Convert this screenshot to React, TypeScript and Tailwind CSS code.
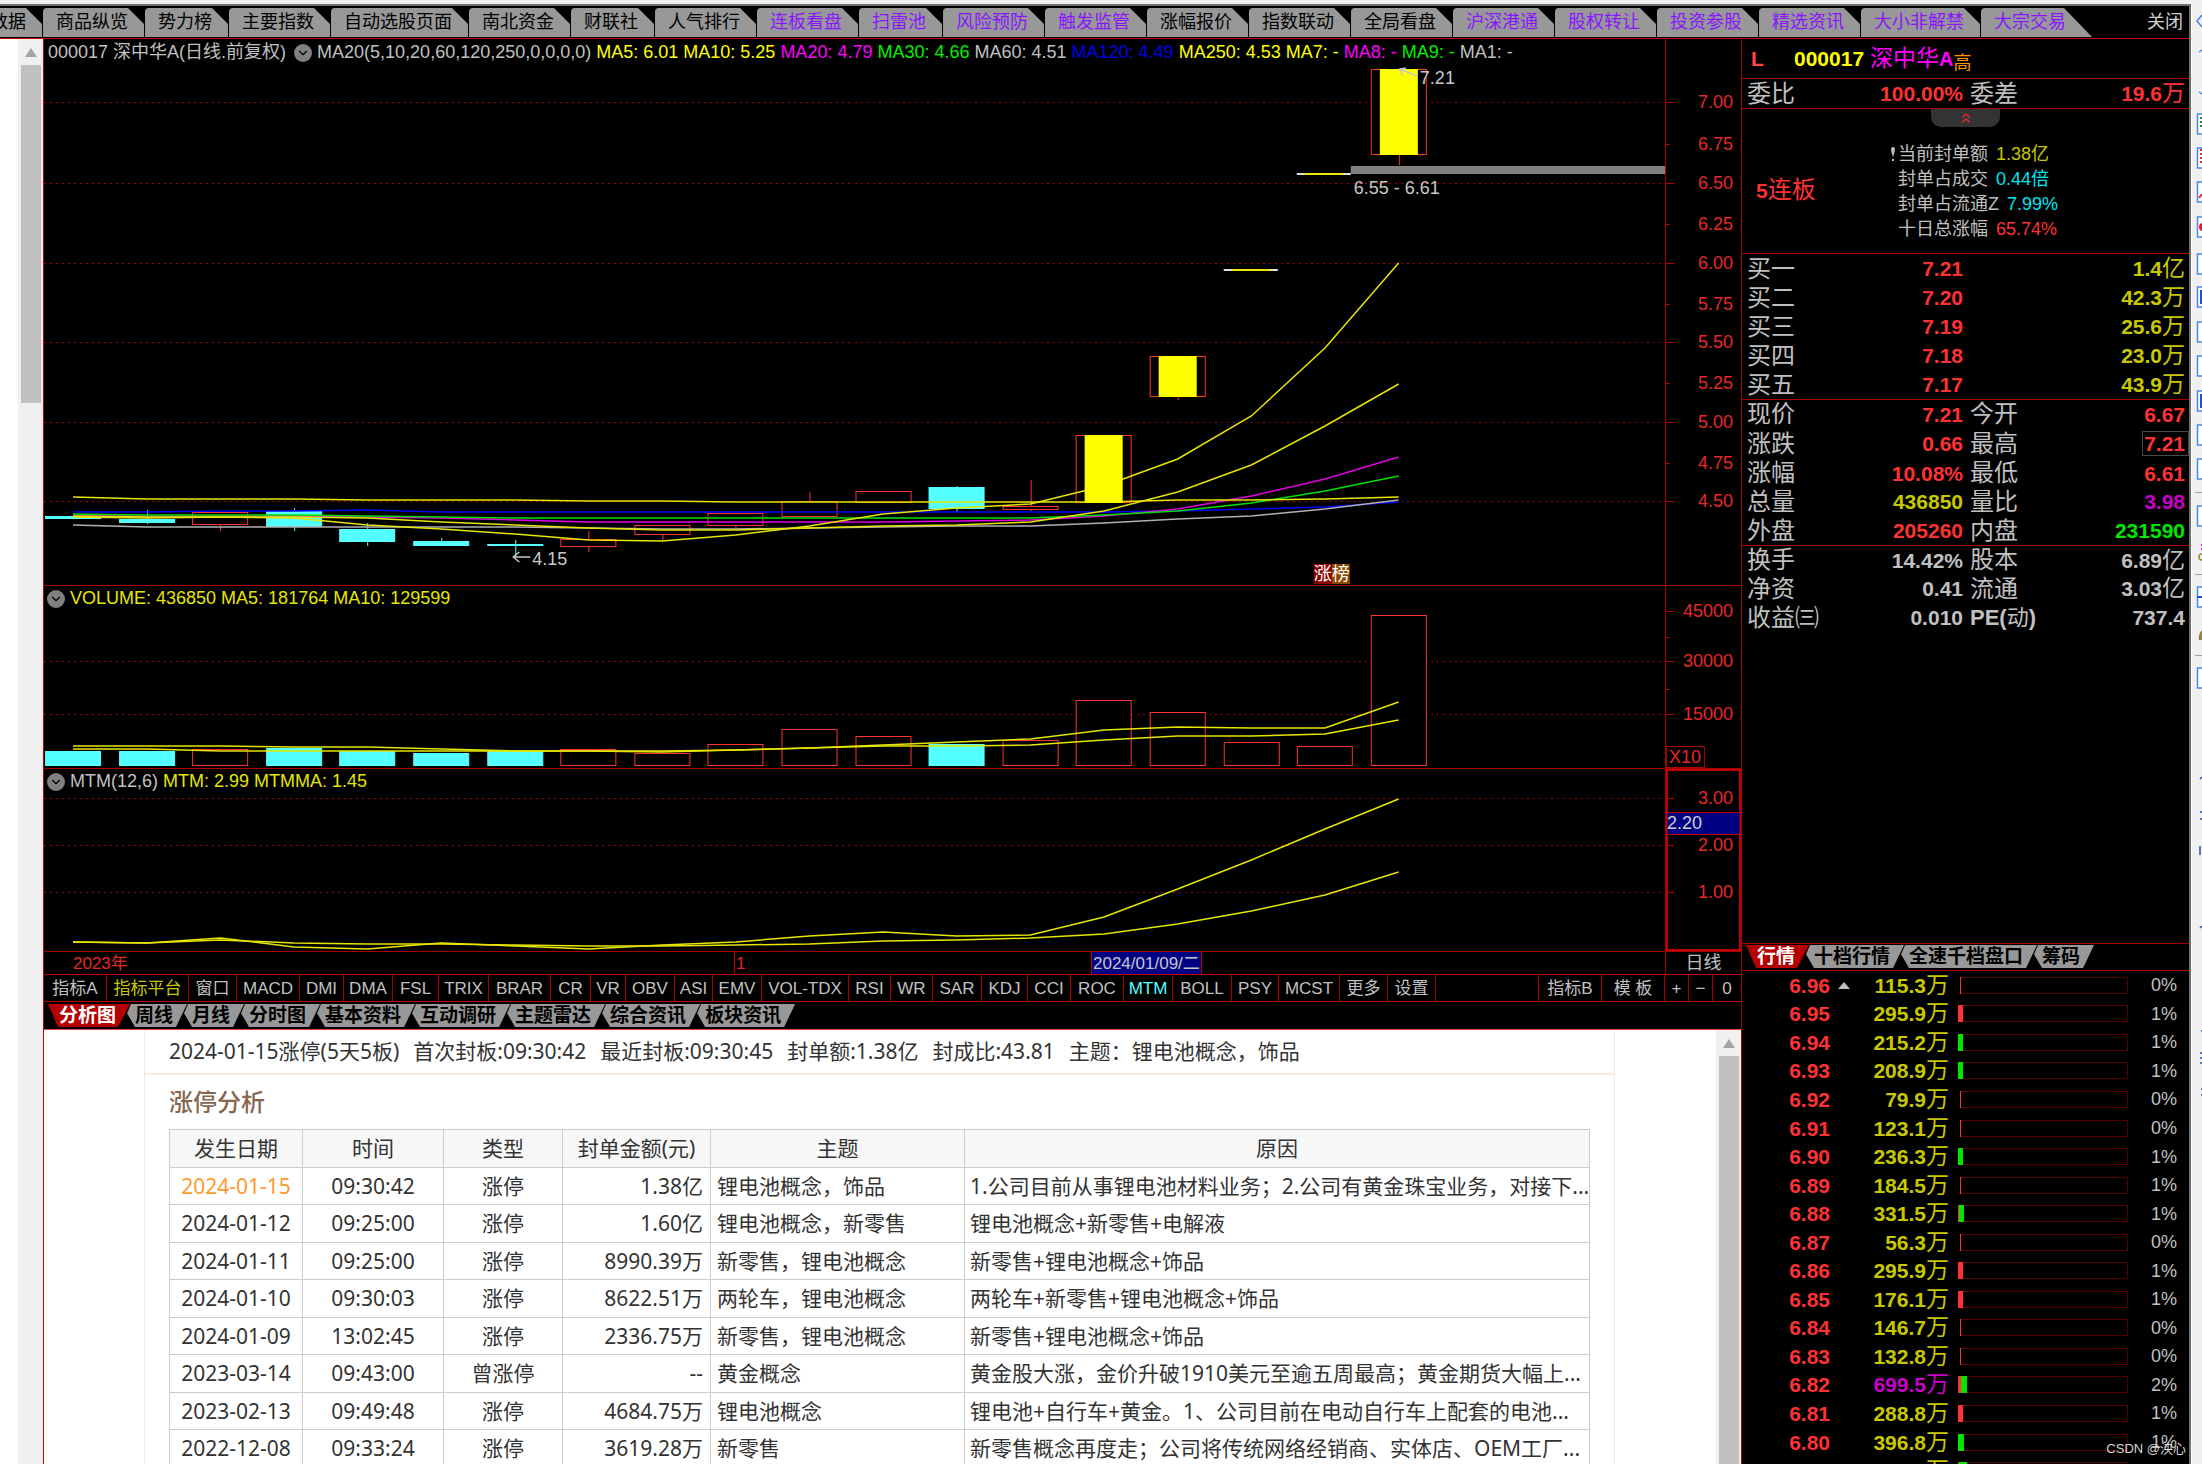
import type { ReactNode } from 'react'
import clsx from 'clsx'
import { ChevronDown, ChevronsUp } from 'lucide-react'

type Row = string[]

const pageTabs: [string, boolean][] = [
    ['商品纵览', false], ['势力榜', false], ['主要指数', false], ['自动选股页面', false],
    ['南北资金', false], ['财联社', false], ['人气排行', false], ['连板看盘', true],
    ['扫雷池', true], ['风险预防', true], ['触发监管', true], ['涨幅报价', false],
    ['指数联动', false], ['全局看盘', false], ['沪深港通', true], ['股权转让', true],
    ['投资参股', true], ['精选资讯', true], ['大小非解禁', true], ['大宗交易', true],
]

const averages: [string, string][] = [
    ['MA5: 6.01', 'text-[#ffff00]'],
    ['MA10: 5.25', 'text-[#ffff00]'],
    ['MA20: 4.79', 'text-[#ff00ff]'],
    ['MA30: 4.66', 'text-[#00f000]'],
    ['MA60: 4.51', 'text-[#c0c0c0]'],
    ['MA120: 4.49', 'text-[#0000e6]'],
    ['MA250: 4.53', 'text-[#ffff00]'],
    ['MA7: -', 'text-[#ffff00]'],
    ['MA8: -', 'text-[#ff00ff]'],
    ['MA9: -', 'text-[#00f000]'],
    ['MA1: -', 'text-[#c0c0c0]'],
]

const indicators: [string, string][] = [
    ['指标A', 'w-[63px]'], ['指标平台', 'w-[82px] text-[#c8c800]'], ['窗口', 'w-[48px]'],
    ['MACD', 'w-[63px]'], ['DMI', 'w-[44px]'], ['DMA', 'w-[49px]'], ['FSL', 'w-[46px]'],
    ['TRIX', 'w-[50px]'], ['BRAR', 'w-[62px]'], ['CR', 'w-[40px]'], ['VR', 'w-[35px]'],
    ['OBV', 'w-[49px]'], ['ASI', 'w-[38px]'], ['EMV', 'w-[49px]'], ['VOL-TDX', 'w-[87px]'],
    ['RSI', 'w-[42px]'], ['WR', 'w-[42px]'], ['SAR', 'w-[49px]'], ['KDJ', 'w-[46px]'],
    ['CCI', 'w-[43px]'], ['ROC', 'w-[53px]'], ['MTM', 'w-[49px] text-[#54ffff]'],
    ['BOLL', 'w-[59px]'], ['PSY', 'w-[47px]'], ['MCST', 'w-[61px]'], ['更多', 'w-[48px]'],
    ['设置', 'w-[48px]'],
]

const indicatorsRight: [string, string][] = [
    ['指标B', 'w-[63px]'], ['模 板', 'w-[63px]'], ['+', 'w-[24px]'], ['−', 'w-[24px]'], ['0', 'w-[28px]'],
]

// top, bottom, high, low of each day, in chart units
interface Candle {
    kind: 'up' | 'down' | 'limit' | 'dash'
    body: [number, number]
    wick?: [number, number]
    volume: number
}

const candles: Candle[] = [
    { kind: 'down', body: [516, 519], volume: 751 },
    { kind: 'down', body: [519, 523], wick: [510, 524], volume: 751 },
    { kind: 'up', body: [512, 525], wick: [525, 531], volume: 749 },
    { kind: 'down', body: [511, 527], wick: [508, 531], volume: 748 },
    { kind: 'down', body: [529, 542], wick: [523, 546], volume: 751 },
    { kind: 'down', body: [541, 546], wick: [538, 546], volume: 753 },
    { kind: 'down', body: [544, 546], wick: [540, 557], volume: 751 },
    { kind: 'up', body: [539, 547], wick: [531, 552], volume: 749 },
    { kind: 'up', body: [525, 535], wick: [535, 541], volume: 753 },
    { kind: 'up', body: [513, 526], wick: [526, 528], volume: 744 },
    { kind: 'up', body: [501, 517], wick: [492, 501], volume: 729 },
    { kind: 'up', body: [491, 503], volume: 736 },
    { kind: 'down', body: [487, 509], wick: [486, 512], volume: 744 },
    { kind: 'up', body: [506, 510], wick: [480, 512], volume: 740 },
    { kind: 'limit', body: [435, 503], volume: 700 },
    { kind: 'limit', body: [356, 397], wick: [397, 400], volume: 712 },
    { kind: 'dash', body: [270, 270], volume: 742 },
    { kind: 'dash', body: [174, 174], volume: 746 },
    { kind: 'limit', body: [69, 155], wick: [155, 165], volume: 615 },
]

const priceLines: [string, number[]][] = [
    ['#0000ff', [512, 512, 511, 511, 510, 512, 512, 512, 512, 512, 512, 512, 512, 512, 512, 511, 509, 507, 502]],
    ['#b0b0b0', [525, 527, 527, 527, 527, 527, 527, 528, 529, 529, 528, 527, 526, 526, 523, 519, 516, 509, 500]],
    ['#e000e0', [516, 516, 516, 516, 517, 518, 520, 522, 522, 522, 522, 522, 521, 520, 516, 509, 496, 479, 457]],
    ['#00e000', [514, 515, 515, 515, 516, 517, 518, 518, 518, 518, 518, 518, 518, 518, 515, 511, 503, 491, 476]],
    ['#e6e600', [497, 499, 499, 499, 500, 500, 500, 501, 501, 502, 502, 502, 502, 502, 502, 500, 500, 499, 497]],
    ['#e6e600', [516, 517, 517, 517, 518, 522, 525, 528, 530, 530, 528, 526, 525, 522, 511, 492, 465, 426, 384]],
    ['#e6e600', [517, 518, 517, 518, 525, 529, 534, 540, 541, 535, 526, 514, 508, 504, 486, 459, 416, 348, 263]],
]

const volumeLines = [
    [746, 746, 746, 747, 747, 749, 751, 751, 752, 750, 748, 745, 742, 739, 730, 727, 728, 728, 702],
    [749, 749, 751, 751, 751, 751, 751, 751, 751, 750, 748, 746, 746, 745, 740, 736, 736, 734, 720],
]

const mtmLines = [
    [942, 943, 938, 947, 949, 943, 946, 949, 945, 942, 936, 932, 936, 935, 917, 889, 860, 829, 799],
    [942, 943, 940, 943, 944, 944, 945, 946, 946, 945, 944, 941, 940, 938, 934, 924, 911, 895, 872],
]

const cx = (i: number) => 29 + i * 73.6
const toPoints = (ys: number[]) => ys.map((y, i) => `${cx(i)},${y}`).join(' ')

const events: Row[] = [
    ['2024-01-15', '09:30:42', '涨停', '1.38亿', '锂电池概念，饰品', '1.公司目前从事锂电池材料业务；2.公司有黄金珠宝业务，对接下...'],
    ['2024-01-12', '09:25:00', '涨停', '1.60亿', '锂电池概念，新零售', '锂电池概念+新零售+电解液'],
    ['2024-01-11', '09:25:00', '涨停', '8990.39万', '新零售，锂电池概念', '新零售+锂电池概念+饰品'],
    ['2024-01-10', '09:30:03', '涨停', '8622.51万', '两轮车，锂电池概念', '两轮车+新零售+锂电池概念+饰品'],
    ['2024-01-09', '13:02:45', '涨停', '2336.75万', '新零售，锂电池概念', '新零售+锂电池概念+饰品'],
    ['2023-03-14', '09:43:00', '曾涨停', '--', '黄金概念', '黄金股大涨，金价升破1910美元至逾五周最高；黄金期货大幅上...'],
    ['2023-02-13', '09:49:48', '涨停', '4684.75万', '锂电池概念', '锂电池+自行车+黄金。1、公司目前在电动自行车上配套的电池...'],
    ['2022-12-08', '09:33:24', '涨停', '3619.28万', '新零售', '新零售概念再度走；公司将传统网络经销商、实体店、OEM工厂...'],
]

const bids: Row[] = [
    ['买一', '7.21', '1.4亿'],
    ['买二', '7.20', '42.3万'],
    ['买三', '7.19', '25.6万'],
    ['买四', '7.18', '23.0万'],
    ['买五', '7.17', '43.9万'],
]

const red = 'text-[#ff3232]'
const yellow = 'text-[#c8c800]'
const gray = 'text-[#c0c0c0]'

const quote: Row[] = [
    ['现价', '7.21', red, '今开', '6.67', red],
    ['涨跌', '0.66', red, '最高', '7.21', red],
    ['涨幅', '10.08%', red, '最低', '6.61', red],
    ['总量', '436850', yellow, '量比', '3.98', 'text-[#c800c8]'],
    ['外盘', '205260', red, '内盘', '231590', 'text-[#00e600]'],
]

const finance: Row[] = [
    ['换手', '14.42%', gray, '股本', '6.89亿', gray],
    ['净资', '0.41', gray, '流通', '3.03亿', gray],
    ['收益㈢', '0.010', gray, 'PE(动)', '737.4', gray],
]

// price, volume, red part and green part of the bar, percent
const levels: [string, string, number, number, string][] = [
    ['6.96', '115.3万', 1, 0, '0%'],
    ['6.95', '295.9万', 5, 0, '1%'],
    ['6.94', '215.2万', 0, 5, '1%'],
    ['6.93', '208.9万', 0, 5, '1%'],
    ['6.92', '79.9万', 1, 0, '0%'],
    ['6.91', '123.1万', 1, 0, '0%'],
    ['6.90', '236.3万', 0, 5, '1%'],
    ['6.89', '184.5万', 1, 0, '1%'],
    ['6.88', '331.5万', 1, 5, '1%'],
    ['6.87', '56.3万', 1, 0, '0%'],
    ['6.86', '295.9万', 5, 0, '1%'],
    ['6.85', '176.1万', 5, 0, '1%'],
    ['6.84', '146.7万', 1, 0, '0%'],
    ['6.83', '132.8万', 1, 0, '0%'],
    ['6.82', '699.5万', 3, 6, '2%'],
    ['6.81', '288.8万', 5, 0, '1%'],
    ['6.80', '396.8万', 0, 6, '1%'],
    ['6.79', '387.2万', 1, 8, '1%'],
]

const Num = ({ value }: { value: string }) => {
    const unit = /[亿万]$/.test(value) ? value.slice(-1) : ''
    return (
        <>
            <span className="font-bold">{unit ? value.slice(0, -1) : value}</span>
            {unit && <span className="text-[23px]">{unit}</span>}
        </>
    )
}

const Collapse = ({ label }: { label: string }) => (
    <button aria-label={label} className="flex size-[18px] shrink-0 items-center justify-center rounded-full bg-[#808080] text-black">
        <ChevronDown size={14} strokeWidth={2} />
    </button>
)

const Grid = ({ ys }: { ys: number[] }) => (
    <g stroke="#a00000" strokeWidth="1" strokeDasharray="2 4" shapeRendering="crispEdges">
        {ys.map((y) => <line key={y} x1="0" x2="1620" y1={y + 0.5} y2={y + 0.5} />)}
    </g>
)

const Lines = ({ series }: { series: [string, number[]][] }) => (
    <g fill="none" strokeWidth="1.5">
        {series.map(([color, ys], i) => <polyline key={i} points={toPoints(ys)} stroke={color} />)}
    </g>
)

const CandleShape = ({ candle, index }: { candle: Candle; index: number }) => {
    const x = Math.round(cx(index))
    const [top, bottom] = candle.body
    const color = candle.kind === 'down' ? '#54ffff' : '#ff3232'
    if (candle.kind === 'dash') {
        return (
            <g>
                <rect x={x - 28} y={top - 1} width="54" height="2" fill="#e0e0e0" />
                <rect x={x - 20} y={top - 1} width="38" height="2" fill="#e6e600" />
            </g>
        )
    }
    return (
        <g>
            {candle.wick && <line x1={x + 0.5} x2={x + 0.5} y1={candle.wick[0]} y2={candle.wick[1]} stroke={color} />}
            <rect
                x={x - 27.5}
                y={top + 0.5}
                width="55"
                height={bottom - top - 1}
                fill={candle.kind === 'down' ? color : '#000'}
                stroke={color}
            />
        </g>
    )
}

const Axis = ({ top, height, labels, minor, children }: {
    top: number
    height: number
    labels: [string, number][]
    minor?: number[]
    children?: ReactNode
}) => (
    <svg viewBox={`0 ${top} 75 ${height}`} className="h-full w-[76px] shrink-0 border-l border-[#a80000] text-[18px]">
        <g stroke="#c00000">
            {minor?.map((y) => <line key={y} x1="0" x2="4" y1={y + 0.5} y2={y + 0.5} />)}
        </g>
        {labels.map(([text, y]) => (
            <g key={text}>
                {!minor?.includes(y) && <line x1="0" x2="8" y1={y + 0.5} y2={y + 0.5} stroke="#c00000" />}
                <text x="67" y={y + 6} textAnchor="end" fill="#e62828">{text}</text>
            </g>
        ))}
        {children}
    </svg>
)

const SlantTabs = ({ items }: { items: string[] }) => (
    <div className="flex h-[23px] pl-[4px]">
        {items.map((item, i) => (
            <button
                key={item}
                className={clsx(
                    'flex items-center text-[19px] leading-none font-bold whitespace-nowrap',
                    i === 0
                        ? 'bg-[#b40000] pr-[14px] pl-[11px] text-white [clip-path:polygon(0_0,100%_0,calc(100%-12px)_100%,10px_100%)]'
                        : '-ml-[3px] bg-[#989898] pr-[14px] pl-[8px] text-black [clip-path:polygon(4px_0,100%_0,calc(100%-11px)_100%,8px_100%,0_40%)]',
                )}
            >
                {item}
            </button>
        ))}
    </div>
)

const PageTabs = () => (
    <nav className="flex h-[34px] shrink-0 items-end overflow-hidden border-t-2 border-[#707070] bg-black pb-px text-[18px]">
        <button className="flex h-[29px] w-[42px] shrink-0 items-center justify-end bg-[#989898] pr-[16px] whitespace-nowrap text-black [clip-path:polygon(0_0,calc(100%-16px)_0,100%_55%,100%_100%,0_100%)]">
            数据
        </button>
        {pageTabs.map(([name, special], i) => (
            <button
                key={name}
                className={clsx(
                    'ml-px flex h-[29px] shrink-0 items-center rounded-tl-[4px] bg-[#989898] pl-[13px] whitespace-nowrap',
                    special ? 'text-[#8a14ff]' : 'text-black',
                    i === pageTabs.length - 1
                        ? 'pr-[26px] [clip-path:polygon(0_0,calc(100%-28px)_0,100%_100%,0_100%)]'
                        : 'pr-[16px] [clip-path:polygon(0_0,calc(100%-16px)_0,100%_55%,100%_100%,0_100%)]',
                )}
            >
                {name}
            </button>
        ))}
        <button className="mr-[6px] ml-auto flex h-[29px] shrink-0 items-center text-[#d0d0d0]">关闭</button>
    </nav>
)

const PricePanel = () => (
    <section className="flex h-[547px] border-b border-[#a80000]">
        <div className="min-w-0 flex-1">
            <header className="flex h-[27px] items-center gap-[5px] overflow-hidden pl-[4px] text-[18px] whitespace-nowrap text-[#c0c0c0]">
                <span className="mr-[3px]">000017 深中华A(日线.前复权)</span>
                <Collapse label="均线" />
                <span>MA20(5,10,20,60,120,250,0,0,0,0)</span>
                {averages.map(([text, color]) => <span key={text} className={color}>{text}</span>)}
            </header>
            <svg viewBox="0 66 1620 519" preserveAspectRatio="none" className="h-[519px] w-full text-[18px]">
                <Grid ys={[102, 183, 263, 342, 422, 501]} />
                {candles.map((candle, i) => <CandleShape key={i} candle={candle} index={i} />)}
                <Lines series={priceLines} />
                {/* limit-up days are filled over the averages */}
                {candles.map(({ kind, body }, i) => kind === 'limit' && (
                    <rect key={i} x={Math.round(cx(i)) - 19} y={body[0]} width="38" height={body[1] - body[0]} fill="#ffff00" />
                ))}
                <rect x="1306" y="166" width="314" height="8" fill="#808080" />
                <g fill="none" stroke="#c8c8c8" strokeWidth="1.5">
                    <path d="M1372 76 L1355 69 M1361 68 L1355 69 L1358 76" />
                    <path d="M486 557 H469 M475 552 L469 557 L475 562" />
                </g>
                <g fill="#c8c8c8">
                    <text x="1375" y="84">7.21</text>
                    <text x="1309" y="194">6.55 - 6.61</text>
                    <text x="488" y="565">4.15</text>
                </g>
                <rect x="1269" y="564" width="18" height="20" fill="#8c0000" />
                <rect x="1287" y="564" width="18" height="20" fill="#8c4600" />
                <text x="1269" y="580" fill="#fff">涨榜</text>
            </svg>
        </div>
        <Axis
            top={39}
            height={546}
            labels={[
                ['7.00', 102], ['6.75', 144], ['6.50', 183], ['6.25', 224], ['6.00', 263], ['5.75', 304],
                ['5.50', 342], ['5.25', 383], ['5.00', 422], ['4.75', 463], ['4.50', 501],
            ]}
            minor={[144, 224, 304, 383, 463]}
        />
    </section>
)

const VolumePanel = () => (
    <section className="flex h-[183px] border-b border-[#a80000]">
        <div className="min-w-0 flex-1">
            <header className="flex h-[25px] items-center gap-[5px] pl-[3px] text-[18px] text-[#e6e600]">
                <Collapse label="成交量" />
                <span>VOLUME: 436850</span>
                <span>MA5: 181764</span>
                <span>MA10: 129599</span>
            </header>
            <svg viewBox="0 611 1620 157" preserveAspectRatio="none" className="h-[157px] w-full">
                <Grid ys={[661, 714]} />
                {candles.map(({ kind, volume }, i) => (
                    <rect
                        key={i}
                        x={Math.round(cx(i)) - 27.5}
                        y={volume + 0.5}
                        width="55"
                        height={765 - volume}
                        fill={kind === 'down' ? '#54ffff' : '#000'}
                        stroke={kind === 'down' ? '#54ffff' : '#ff3232'}
                    />
                ))}
                <Lines series={volumeLines.map((ys) => ['#e6e600', ys])} />
            </svg>
        </div>
        <Axis top={586} height={182} labels={[['45000', 611], ['30000', 661], ['15000', 714]]} minor={[637, 689]}>
            <rect x="0.5" y="746.5" width="38" height="21" fill="none" stroke="#a80000" />
            <text x="3" y="763" fill="#e62828">X10</text>
        </Axis>
    </section>
)

const MtmPanel = () => (
    <section className="flex h-[183px] border-b border-[#a80000]">
        <div className="min-w-0 flex-1">
            <header className="flex h-[25px] items-center gap-[5px] pl-[3px] text-[18px] text-[#e6e600]">
                <Collapse label="MTM" />
                <span className="text-[#c0c0c0]">MTM(12,6)</span>
                <span>MTM: 2.99</span>
                <span>MTMMA: 1.45</span>
            </header>
            <svg viewBox="0 794 1620 157" preserveAspectRatio="none" className="h-[157px] w-full">
                <Grid ys={[798, 845, 892]} />
                <Lines series={mtmLines.map((ys) => ['#e6e600', ys])} />
            </svg>
        </div>
        <Axis top={769} height={182} labels={[['3.00', 798], ['2.00', 845], ['1.00', 892]]}>
            <rect x="1" y="770" width="73" height="180" fill="none" stroke="#c00000" strokeWidth="2" />
            <rect x="1" y="812.5" width="73" height="22" fill="#000084" stroke="#c00000" />
            <text x="1" y="829" fill="#d0d0d0">2.20</text>
        </Axis>
    </section>
)

const DateRow = () => (
    <div className="flex h-[23px] items-center border-b border-[#c00000] text-[17px] leading-none text-[#e62828]">
        <span className="w-[690px] shrink-0 pl-[29px]">2023年</span>
        <span className="flex h-full w-[357px] shrink-0 items-center border-l border-[#c00000] pl-px">1</span>
        <span className="flex h-full shrink-0 items-center border-x border-[#c00000] bg-[#000084] px-px text-[#c8c8c8]">
            2024/01/09/二
        </span>
        <span className="ml-auto flex h-full w-[76px] items-center justify-center border-l border-[#a80000] text-[18px] text-[#c0c0c0]">
            日线
        </span>
    </div>
)

const IndicatorButton = ({ name, style }: { name: string; style: string }) => (
    <button className={clsx('h-full shrink-0 border-r border-[#a80000] whitespace-nowrap', style)}>{name}</button>
)

const IndicatorRow = () => (
    <div className="flex h-[27px] items-center border-b border-[#c00000] text-[17px] leading-none text-[#c0c0c0]">
        {indicators.map(([name, style]) => <IndicatorButton key={name} name={name} style={style} />)}
        <div className="ml-auto flex h-full border-l border-[#a80000] [&>button:last-child]:border-r-0">
            {indicatorsRight.map(([name, style]) => <IndicatorButton key={name} name={name} style={style} />)}
        </div>
    </div>
)

const Analysis = () => (
    <div className="flex min-h-0 flex-1 overflow-hidden bg-white font-['Noto_Sans','Noto_Sans_CJK_SC',sans-serif] text-[21px] leading-none text-[#333]">
        <article className="mr-[101px] ml-[100px] min-w-0 flex-1 border-x border-[#ececec]">
            <p className="flex h-[45px] items-center gap-[14px] overflow-hidden border-b-2 border-[#f8ecdf] pl-[24px] whitespace-nowrap">
                <span>2024-01-15涨停(5天5板)</span>
                <span>首次封板:09:30:42</span>
                <span>最近封板:09:30:45</span>
                <span>封单额:1.38亿</span>
                <span>封成比:43.81</span>
                <span>主题：锂电池概念，饰品</span>
            </p>
            <h2 className="flex h-[54px] items-center pl-[24px] text-[24px] font-medium text-[#86664f]">涨停分析</h2>
            <div className="px-[24px]">
                <table className="w-full table-fixed border-collapse whitespace-nowrap [&_td]:border [&_td]:border-[#ccc] [&_td]:py-0 [&_th]:border [&_th]:border-[#ccc]">
                    <colgroup>
                        <col className="w-[133px]" />
                        <col className="w-[141px]" />
                        <col className="w-[119px]" />
                        <col className="w-[148px]" />
                        <col className="w-[254px]" />
                        <col />
                    </colgroup>
                    <thead>
                        <tr className="h-[38px] bg-[#f7f7f7]">
                            {['发生日期', '时间', '类型', '封单金额(元)', '主题', '原因'].map((head) => (
                                <th key={head} className="p-0 font-normal">{head}</th>
                            ))}
                        </tr>
                    </thead>
                    <tbody>
                        {events.map(([date, time, type, amount, topic, reason], i) => (
                            <tr key={date} className="h-[37px] even:h-[38px]">
                                <td className={clsx('text-center', i === 0 && 'text-[#ff9a2e]')}>{date}</td>
                                <td className="text-center">{time}</td>
                                <td className="text-center">{type}</td>
                                <td className="pr-[7px] text-right">{amount}</td>
                                <td className="pl-[6px]">{topic}</td>
                                <td className="pl-[5px]">{reason}</td>
                            </tr>
                        ))}
                    </tbody>
                </table>
            </div>
        </article>
        <Scrollbar thumb="h-[500px]" />
    </div>
)

const Scrollbar = ({ thumb }: { thumb: string }) => (
    <div className="flex w-[25px] shrink-0 flex-col items-center overflow-hidden bg-[#f0f0f0] pt-[9px]">
        <svg viewBox="0 0 12 9" className="h-[9px] w-[12px] shrink-0"><path d="M0 9 L6 0 L12 9 Z" fill="#a3a3a3" /></svg>
        <div className={clsx('mt-[8px] w-[20px] shrink-0 bg-[#c1c1c1]', thumb)} />
    </div>
)

const PairTable = ({ rows, height }: { rows: Row[]; height: string }) => (
    <table className={clsx('w-full table-fixed text-[21px] leading-none', height)}>
        <colgroup>
            <col className="w-[95px]" />
            <col className="w-[126px]" />
            <col className="w-[110px]" />
            <col />
        </colgroup>
        <tbody>
            {rows.map(([label, value, color, label2, value2, color2]) => (
                <tr key={label}>
                    <th className="p-0 pl-[5px] text-left text-[24px] font-normal whitespace-nowrap text-[#c0c0c0]">{label}</th>
                    <td className={clsx('p-0 text-right', color)}><Num value={value} /></td>
                    <th className={clsx('p-0 pl-[7px] text-left font-normal whitespace-nowrap text-[#c0c0c0]', label2.startsWith('PE') ? 'text-[22px]' : 'text-[24px]')}>
                        {label2.startsWith('PE') ? <><b>PE(</b>动<b>)</b></> : label2}
                    </th>
                    <td className={clsx('p-0 text-right', color2)}>
                        {label2 === '最高'
                            ? <span className="inline-block border border-[#484848] py-px pr-[3px] pl-px"><Num value={value2} /></span>
                            : <span className="pr-[4px]"><Num value={value2} /></span>}
                    </td>
                </tr>
            ))}
        </tbody>
    </table>
)

const QuotePanel = () => (
    <aside className="flex w-[448px] shrink-0 flex-col overflow-hidden border-l border-[#a80000] bg-black text-[#c0c0c0]">
        <h1 className="flex h-[40px] shrink-0 items-center border-b border-[#a80000] pl-[9px] text-[21px] leading-none">
            <span className="w-[43px] font-bold text-[#ff4646]">L</span>
            <span className="mr-[6px] font-bold text-[#ffff00]">000017</span>
            <span className="text-[23px] text-[#ff00ff]">深中华<b className="text-[20px]">A</b></span>
            <span className="mt-[8px] text-[18px] text-[#ff9600]">高</span>
        </h1>
        <div className="shrink-0 border-b border-[#a80000]">
            <PairTable height="h-[29px]" rows={[['委比', '100.00%', red, '委差', '19.6万', red]]} />
        </div>
        <div className="flex h-[145px] shrink-0 flex-col border-b border-[#a80000]">
            <button aria-label="收起" className="ml-[189px] flex h-[18px] w-[69px] items-center justify-center rounded-b-[10px] bg-[#333] text-[#e62828]">
                <ChevronsUp size={16} />
            </button>
            <div className="flex items-center pt-[15px] pl-[14px]">
                <strong className="w-[134px] pb-[4px] text-[24px] leading-none font-normal text-[#ff3232]"><b className="text-[21px]">5</b>连板</strong>
                <ul className="text-[18px] leading-[25px]">
                    <li className="flex gap-[8px]">
                        <span className="flex items-center">
                            <svg viewBox="0 0 6 18" className="mr-[2px] h-[18px] w-[6px]" fill="#c0c0c0"><path d="M3 1 C5.500 1 5.500 4 3 11 C0.500 4 0.500 1 3 1 Z M2 13 h2 v2 h-2 Z" /></svg>
                            当前封单额
                        </span>
                        <span className="text-[#c8c800]">1.38亿</span>
                    </li>
                    <li className="flex gap-[8px] pl-[8px]"><span>封单占成交</span><span className="text-[#00e6f0]">0.44倍</span></li>
                    <li className="flex gap-[8px] pl-[8px]"><span>封单占流通Z</span><span className="text-[#00e6f0]">7.99%</span></li>
                    <li className="flex gap-[8px] pl-[8px]"><span>十日总涨幅</span><span className="text-[#ff3232]">65.74%</span></li>
                </ul>
            </div>
        </div>
        <div className="shrink-0 border-b border-[#a80000]">
            <PairTable height="h-[145px]" rows={bids.map(([label, price, amount]) => [label, price, red, '', amount, yellow])} />
        </div>
        <div className="shrink-0 border-b border-[#a80000]">
            <PairTable height="h-[145px]" rows={quote} />
        </div>
        <div className="h-[397px] shrink-0">
            <PairTable height="h-[86px]" rows={finance} />
        </div>
        <div className="shrink-0 border-y border-[#a80000] pt-px pb-[2px]">
            <SlantTabs items={['行情', '十档行情', '全速千档盘口', '筹码']} />
        </div>
        <div className="relative min-h-0 flex-1 overflow-hidden">
            <table className="h-[514px] w-full table-fixed text-[21px] leading-none">
                <colgroup>
                    <col className="w-[88px]" />
                    <col className="w-[20px]" />
                    <col className="w-[99px]" />
                    <col />
                    <col className="w-[60px]" />
                </colgroup>
                <tbody>
                    {levels.map(([price, amount, up, down, percent], i) => (
                        <tr key={price}>
                            <td className="p-0 text-right font-bold text-[#ff3232]">{price}</td>
                            <td className="p-0 pl-[8px]">
                                {i === 0 && <svg viewBox="0 0 12 7" className="h-[7px] w-[12px]"><path d="M0 7 L6 0 L12 7 Z" fill="#c0c0c0" /></svg>}
                            </td>
                            <td className={clsx('p-0 text-right', price === '6.82' ? 'text-[#c800c8]' : 'text-[#c8c800]')}><Num value={amount} /></td>
                            <td className="p-0 pl-[9px]">
                                <div className={clsx('flex h-[17px] w-[170px]', up + down === 1 && 'pl-[2px]')}>
                                    <div className="bg-[#ff3232]" style={{ width: up }} />
                                    <div className="bg-[#00e600]" style={{ width: down }} />
                                    <div className="flex-1 border border-l-0 border-dotted border-[#a80000]" />
                                </div>
                            </td>
                            <td className="p-0 pr-[12px] text-right text-[18px]">{percent}</td>
                        </tr>
                    ))}
                </tbody>
            </table>
            <span className="absolute right-[3px] bottom-[9px] text-[13px] leading-none text-[#d8d8d8]">CSDN @泱心</span>
        </div>
    </aside>
)

// the window to the right only shows the left edge of its tool buttons
const ToolStrip = () => (
    <svg viewBox="0 4 13 1460" className="w-[13px] shrink-0 bg-[#f0f0f0]" preserveAspectRatio="xMinYMin slice">
        <rect x="0" y="0" width="2" height="1464" fill="#707070" />
        <rect x="2" y="0" width="1" height="1464" fill="#fff" />
        <g fill="none" stroke="#4a86e8" strokeWidth="1.500">
            <path d="M13 15 L8 21 L13 27 M10 52 L13 50 M10 92 L13 94" />
            {[124, 158, 192, 227, 264, 297, 332, 366, 401, 435, 469, 516, 597, 678].map((y) => (
                <rect key={y} x="8.5" y={y - 10} width="10" height="20" fill="#fff" />
            ))}
        </g>
        <g stroke="#2a8a2a" strokeWidth="2"><path d="M11 118 h3 M11 122 h3 M11 126 h3" /></g>
        <g stroke="#ff2020" strokeWidth="2"><path d="M11 150 h3 M11 154 h3 M11 158 h3 M11 162 h3 M10 198 l3 -4" /></g>
        <circle cx="14" cy="227" r="4" fill="#ff1010" />
        <g stroke="#2050d0" strokeWidth="2"><path d="M12 290 v14 M12 394 v14 M8 597 h5" /></g>
        <path d="M12 545 h2 M12 549 h2" stroke="#ff00ff" strokeWidth="2" />
        <circle cx="13" cy="557" r="3" fill="none" stroke="#909020" strokeWidth="1.500" />
        <path d="M13 630 q-4 4 -3 10 h4 Z" fill="#a08040" />
        <g stroke="#a0a0a0"><path d="M6 492.500 h7 M6 574.500 h7 M6 655.500 h7" /></g>
        <g stroke="#2850a0" strokeWidth="1.500">
            <path d="M11 779 l2 -2 M11 812 h2 M11 819 h2 M11 846 v9 M11 928 l2 -2 M12 1031 h1 M11 1053 h2 M11 1058 h2 M11 1063 h2 M12 1089 h1 M12 1095 h1" />
        </g>
    </svg>
)

const App = () => {
    return (
        <div className="flex h-screen flex-col overflow-hidden bg-black font-['Liberation_Sans','Noto_Sans_CJK_SC',sans-serif]">
            <div className="h-[4px] shrink-0 bg-[#f0f0f0]" />
            <div className="flex min-h-0 flex-1">
                <div className="flex min-w-0 flex-1 flex-col">
                    <PageTabs />
                    <div className="flex min-h-0 flex-1 border-t border-[#c80000]">
                        <div className="flex w-[43px] shrink-0 bg-white pl-[18px]">
                            <Scrollbar thumb="h-[338px]" />
                        </div>
                        <main className="flex min-w-0 flex-1 flex-col border-l border-[#c80000]">
                            <PricePanel />
                            <VolumePanel />
                            <MtmPanel />
                            <DateRow />
                            <IndicatorRow />
                            <div className="h-[28px] shrink-0 border-b border-[#e04040] pt-[2px]">
                                <SlantTabs items={['分析图', '周线', '月线', '分时图', '基本资料', '互动调研', '主题雷达', '综合资讯', '板块资讯']} />
                            </div>
                            <Analysis />
                        </main>
                        <QuotePanel />
                    </div>
                </div>
                <ToolStrip />
            </div>
        </div>
    )
}

export default App
